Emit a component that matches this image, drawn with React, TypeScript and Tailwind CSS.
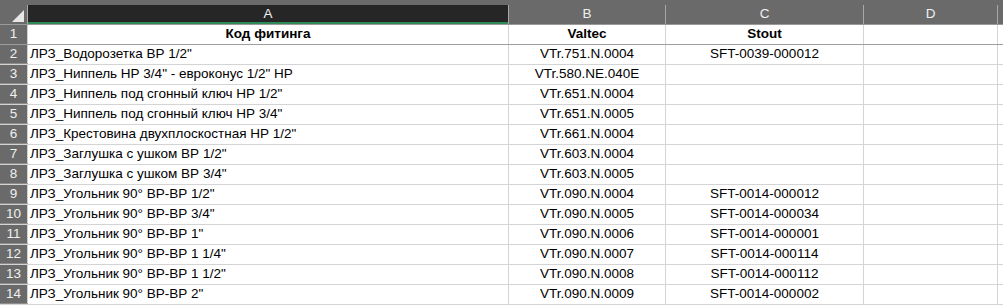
const rows = [
  { a: 'ЛРЗ_Водорозетка ВР 1/2"', b: 'VTr.751.N.0004', c: 'SFT-0039-000012' },
  { a: 'ЛРЗ_Ниппель НР 3/4" - евроконус 1/2" НР', b: 'VTr.580.NE.040E', c: '' },
  { a: 'ЛРЗ_Ниппель под сгонный ключ НР 1/2"', b: 'VTr.651.N.0004', c: '' },
  { a: 'ЛРЗ_Ниппель под сгонный ключ НР 3/4"', b: 'VTr.651.N.0005', c: '' },
  { a: 'ЛРЗ_Крестовина двухплоскостная НР 1/2"', b: 'VTr.661.N.0004', c: '' },
  { a: 'ЛРЗ_Заглушка с ушком ВР 1/2"', b: 'VTr.603.N.0004', c: '' },
  { a: 'ЛРЗ_Заглушка с ушком ВР 3/4"', b: 'VTr.603.N.0005', c: '' },
  { a: 'ЛРЗ_Угольник 90° ВР-ВР 1/2"', b: 'VTr.090.N.0004', c: 'SFT-0014-000012' },
  { a: 'ЛРЗ_Угольник 90° ВР-ВР 3/4"', b: 'VTr.090.N.0005', c: 'SFT-0014-000034' },
  { a: 'ЛРЗ_Угольник 90° ВР-ВР 1"', b: 'VTr.090.N.0006', c: 'SFT-0014-000001' },
  { a: 'ЛРЗ_Угольник 90° ВР-ВР 1 1/4"', b: 'VTr.090.N.0007', c: 'SFT-0014-000114' },
  { a: 'ЛРЗ_Угольник 90° ВР-ВР 1 1/2"', b: 'VTr.090.N.0008', c: 'SFT-0014-000112' },
  { a: 'ЛРЗ_Угольник 90° ВР-ВР 2"', b: 'VTr.090.N.0009', c: 'SFT-0014-000002' },
]

const cell = 'h-full border-r border-[#d4d4d4] flex items-center overflow-hidden whitespace-nowrap'

const App = () => {
  return (
    <div
      className="w-[1003px] h-[305px] overflow-hidden bg-white text-[13.5px] text-black"
      style={{ fontFamily: '"Liberation Sans", Arial, sans-serif' }}
    >
      {/* column headers */}
      <div className="h-[25px] bg-[#6a6a6a] pt-[5px] border-b border-[#9a9a9a]">
        <div className="flex h-[19px] text-[#f0f0f0]">
          <div className="w-[28px] shrink-0 relative bg-[#6a6a6a] border-r border-[#a8a8a8]">
            <div className="absolute right-[3px] bottom-[2px] w-0 h-0 border-l-[12px] border-l-transparent border-b-[12px] border-b-[#e8e8e8]" />
          </div>
          <div className="w-[481px] shrink-0 bg-[#262626] border-r border-[#a8a8a8] flex items-center justify-center relative">
            A
            <div className="absolute left-0 right-0 bottom-0 h-[2px] bg-[#2e8b57]" />
          </div>
          <div className="w-[157px] shrink-0 border-r border-[#a8a8a8] flex items-center justify-center">B</div>
          <div className="w-[198px] shrink-0 border-r border-[#a8a8a8] flex items-center justify-center">C</div>
          <div className="w-[134px] shrink-0 border-r border-[#a8a8a8] flex items-center justify-center">D</div>
          <div className="flex-1" />
        </div>
      </div>

      {/* header row */}
      <div className="flex h-[20px] border-b border-[#9e9e9e]">
        <div className="w-[28px] shrink-0 h-full bg-[#6a6a6a] border-r border-[#d0d0d0] text-[#f0f0f0] flex items-center justify-center">1</div>
        <div className={`${cell} w-[481px] shrink-0 justify-center font-bold`}>Код фитинга</div>
        <div className={`${cell} w-[157px] shrink-0 justify-center font-bold`}>Valtec</div>
        <div className={`${cell} w-[198px] shrink-0 justify-center font-bold`}>Stout</div>
        <div className={`${cell} w-[134px] shrink-0`} />
        <div className="flex-1" />
      </div>

      {rows.map((r, i) => (
        <div key={i} className="flex h-[20px] border-b border-[#d4d4d4]">
          <div className="w-[28px] shrink-0 h-full bg-[#6a6a6a] border-r border-[#d0d0d0] border-b border-b-[#8c8c8c] text-[#f0f0f0] flex items-center justify-center">
            {i + 2}
          </div>
          <div className={`${cell} w-[481px] shrink-0 pl-[2px]`}>{r.a}</div>
          <div className={`${cell} w-[157px] shrink-0 justify-center`}>{r.b}</div>
          <div className={`${cell} w-[198px] shrink-0 justify-center`}>{r.c}</div>
          <div className={`${cell} w-[134px] shrink-0`} />
          <div className="flex-1" />
        </div>
      ))}
    </div>
  )
}

export default App
